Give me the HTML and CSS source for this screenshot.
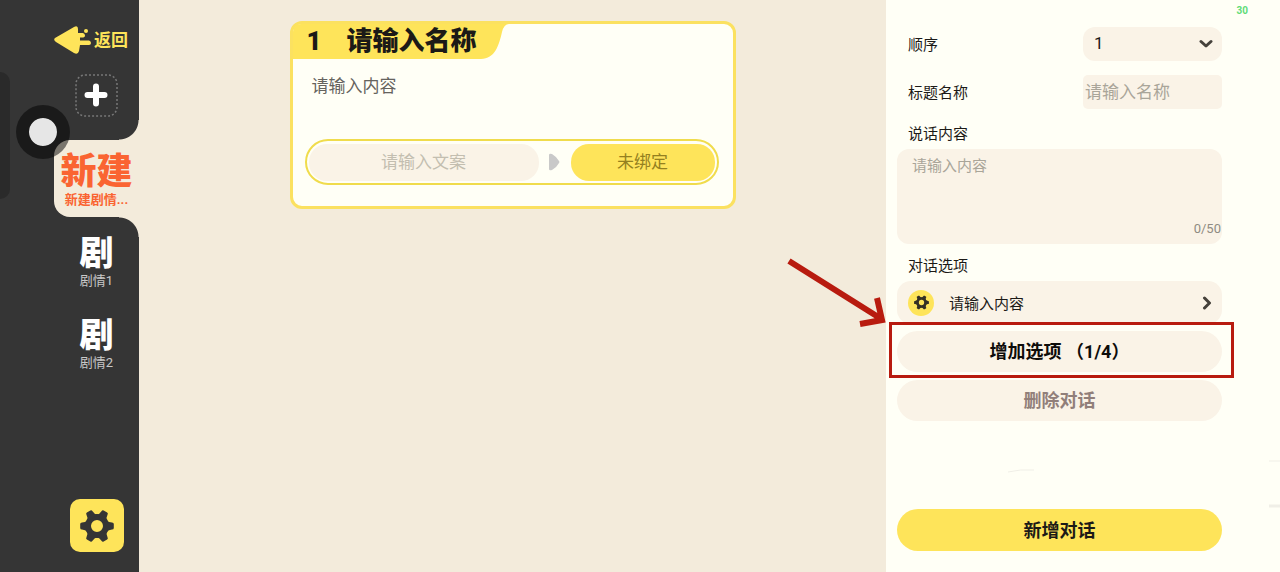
FILE: index.html
```html
<!DOCTYPE html>
<html lang="zh-CN">
<head>
  <meta charset="UTF-8">
  <meta name="viewport" content="width=device-width, initial-scale=1">
  <title>剧情编辑</title>
  <link rel="stylesheet" href="styles.css">
</head>
<body>
  <svg width="0" height="0" class="defs">
    <symbol id="gear" viewBox="-17 -17 34 34">
      <circle r="9" fill="none" stroke="currentColor" stroke-width="6"/>
      <g fill="currentColor">
        <path id="tooth" d="M9 -6 Q12 -3.500 15 -3.500 Q16.800 -3.500 16.800 -2 V2 Q16.800 3.500 15 3.500 Q12 3.500 9 6 Z"/>
        <use href="#tooth" transform="rotate(60)"/>
        <use href="#tooth" transform="rotate(120)"/>
        <use href="#tooth" transform="rotate(180)"/>
        <use href="#tooth" transform="rotate(240)"/>
        <use href="#tooth" transform="rotate(300)"/>
      </g>
    </symbol>
  </svg>

  <nav class="sidebar">
    <button class="back">
      <svg width="37" height="28" viewBox="0 0 37 28" fill="#fee45a">
        <path d="M1 12 L20 1 Q24 -1 24 3 L24 7 L29 7 Q31 7.500 31 9.500 Q31 11.500 28 11.500 L26 11.500 L26 14.500 L35 14.500 Q37 15 37 17 Q37 19 35 19 L26 19 L25 25 Q24 29 20 27 L2 16 Q-1 14 1 12 Z"/>
        <circle cx="32" cy="5" r="2"/>
      </svg>
      <span>返回</span>
    </button>
    <button class="add" aria-label="添加">
      <svg width="43" height="43" viewBox="0 0 43 43" fill="none">
        <rect x="1" y="1" width="41" height="41" rx="9" stroke="#777" stroke-width="1.500" stroke-dasharray="2 2"/>
        <path d="M21 12.500 V29.500 M12.500 21 H29.500" stroke="#fff" stroke-width="6" stroke-linecap="round"/>
      </svg>
    </button>
    <a class="story active" href="#">
      <b>新建</b>
      <span>新建剧情...</span>
    </a>
    <a class="story" href="#">
      <b>剧</b>
      <span>剧情1</span>
    </a>
    <a class="story" href="#">
      <b>剧</b>
      <span>剧情2</span>
    </a>
    <button class="settings" aria-label="设置">
      <svg width="34" height="34"><use href="#gear"/></svg>
    </button>
    <div class="edge-handle"></div>
    <div class="float-ball"></div>
  </nav>

  <main class="canvas">
    <section class="card">
      <header class="card-head">
        <h2><span>1</span><span>请输入名称</span></h2>
        <svg width="28" height="35" viewBox="0 0 28 35" fill="#fee45a">
          <path d="M0 0 H28 Q23 0 21 8 C18 21 14 35 0 35 Z"/>
        </svg>
      </header>
      <p class="card-text">请输入内容</p>
      <div class="choice">
        <span class="choice-text">请输入文案</span>
        <svg width="11" height="18" viewBox="0 0 11 18" fill="#c9c9c9">
          <path d="M0 2 Q0 0 3 1 Q8 4 10 8 Q11 9 10 10 Q8 14 3 17 Q0 18 0 16 Z"/>
        </svg>
        <button class="bind">未绑定</button>
      </div>
    </section>
  </main>

  <aside class="panel">
    <span class="fps">30</span>
    <div class="row">
      <label for="order">顺序</label>
      <div class="select">
        <select id="order">
          <option>1</option>
        </select>
        <svg width="14" height="10" viewBox="0 0 14 10"><path d="M2 2.500 L7 7 L12 2.500"/></svg>
      </div>
    </div>
    <div class="row">
      <label for="name">标题名称</label>
      <input id="name" type="text" placeholder="请输入名称">
    </div>
    <label class="title" for="content">说话内容</label>
    <div class="content">
      <textarea id="content" maxlength="50" placeholder="请输入内容"></textarea>
      <span class="count">0/50</span>
    </div>
    <h3 class="title">对话选项</h3>
    <button class="option">
      <span class="option-icon"><svg width="15" height="15"><use href="#gear"/></svg></span>
      <span>请输入内容</span>
      <svg class="chevron" width="10" height="14" viewBox="0 0 10 14"><path d="M2.500 2 L7.500 7 L2.500 12"/></svg>
    </button>
    <div class="marked">
      <button class="pill add-option">增加选项 （1/4）</button>
      <div class="mark-box"></div>
      <svg class="mark-arrow" width="102" height="72" viewBox="0 0 102 72" fill="none" stroke="#b81b0f" stroke-width="6">
        <path d="M3 4 L97 63 M91 41 L96 63 L74 67"/>
      </svg>
    </div>
    <button class="pill delete">删除对话</button>
    <button class="pill create">新增对话</button>
    <svg class="sketch" width="274" height="50" viewBox="0 0 274 50" fill="none" stroke="#f0efe7">
      <path d="M2 12 Q14 9 28 10" stroke-width="1"/>
      <path d="M263 1 H274" stroke-width="1"/>
      <path d="M263 46 H274" stroke-width="3"/>
    </svg>
  </aside>
</body>
</html>
```

FILE: styles.css
```css
* {
  box-sizing: border-box;
}
body {
  margin: 0;
  min-height: 100vh;
  display: flex;
  font-family: Roboto, "Noto Sans CJK SC", sans-serif;
  font-size: 15px;
  color: #1c1a17;
  background: #f3ebdb;
}
button, input, select, textarea {
  font: inherit;
  color: inherit;
  border: none;
  margin: 0;
  padding: 0;
  background: none;
}
button {
  cursor: pointer;
}
svg {
  display: block;
}
.defs {
  position: absolute;
}

/* sidebar */
.sidebar {
  position: relative;
  width: 139px;
  flex: none;
  display: flex;
  flex-direction: column;
  align-items: center;
  padding: 26px 0 20px 54px;
  background: #353535;
}
.back {
  display: flex;
  align-items: center;
  gap: 3px;
  height: 28px;
  margin-right: 11px;
  font-size: 17px;
  font-weight: 700;
  color: #fee45a;
  white-space: nowrap;
}
.back span {
  padding-bottom: 3px;
}
.add {
  margin: 20px 0 23px;
}
.story {
  display: flex;
  flex-direction: column;
  align-items: center;
  gap: 2px;
  width: 100%;
  margin-bottom: 28px;
  color: #fff;
  text-decoration: none;
}
.story b {
  font-size: 34px;
  font-weight: 900;
  line-height: 36px;
}
.story span {
  font-size: 13px;
  line-height: 16px;
  color: #c8c8c8;
}
.story.active {
  position: relative;
  height: 77px;
  margin-bottom: 18px;
  padding-top: 14px;
  border-radius: 16px 0 0 16px;
  background: #f3ebdb;
  color: #fa6432;
}
.story.active b {
  font-size: 36px;
}
.story.active span {
  font-weight: 700;
  color: #fa6432;
}
.story.active::before,
.story.active::after {
  content: "";
  position: absolute;
  right: 0;
  width: 20px;
  height: 20px;
}
.story.active::before {
  bottom: 100%;
  background: radial-gradient(circle at 0 0, transparent 19px, #f3ebdb 20px);
}
.story.active::after {
  top: 100%;
  background: radial-gradient(circle at 0 100%, transparent 19px, #f3ebdb 20px);
}
.settings {
  display: flex;
  align-items: center;
  justify-content: center;
  width: 54px;
  height: 53px;
  margin-top: auto;
  border-radius: 10px;
  background: #fee45a;
  color: #353535;
}
.edge-handle {
  position: absolute;
  left: 0;
  top: 72px;
  width: 10px;
  height: 127px;
  border-radius: 0 10px 10px 0;
  background: #2a2a2a;
}
.float-ball {
  position: absolute;
  left: 16px;
  top: 105px;
  width: 54px;
  height: 54px;
  border: 13px solid rgba(0, 0, 0, 0.5);
  border-radius: 50%;
  background: #e6e6e6;
  background-clip: padding-box;
}

/* canvas */
.canvas {
  flex: 1;
  padding: 21px 16px;
}
.card {
  max-width: 446px;
  min-height: 188px;
  margin: 0 auto;
  border: 3px solid #fbe160;
  border-radius: 12px;
  background: #fffff6;
}
.card-head {
  display: flex;
  height: 35px;
}
.card-head h2 {
  display: flex;
  gap: 25px;
  margin: 0;
  padding: 0 4px 0 14px;
  border-top-left-radius: 8px;
  background: #fee45a;
  font-size: 26px;
  font-weight: 900;
  line-height: 34px;
}
.card-text {
  margin: 15px 19px 41px;
  font-size: 17px;
  line-height: 24px;
  color: #65635e;
}
.choice {
  display: flex;
  align-items: center;
  justify-content: space-between;
  height: 46px;
  margin: 0 14px 0 12px;
  padding: 0 2px;
  border: 2px solid #f0dc4c;
  border-radius: 23px;
  font-size: 17px;
}
.choice-text {
  width: 230px;
  border-radius: 18px;
  background: #faf3e7;
  line-height: 37px;
  text-align: center;
  color: #c3beb0;
}
.bind {
  width: 144px;
  border-radius: 18px;
  background: #fee45a;
  line-height: 37px;
  color: #94801f;
}

/* panel */
.panel {
  position: relative;
  width: 394px;
  flex: none;
  display: flex;
  flex-direction: column;
  padding: 27px 58px 21px 11px;
  background: #fffff6;
}
.fps {
  position: absolute;
  top: 5px;
  right: 32px;
  font-size: 10px;
  font-weight: 700;
  line-height: 12px;
  color: #5fdc78;
}
.row {
  display: flex;
  align-items: center;
  justify-content: space-between;
  height: 34px;
  margin-bottom: 14px;
  padding-left: 11px;
}
.row label {
  padding-bottom: 2px;
}
.select {
  position: relative;
  width: 139px;
}
.select select {
  width: 100%;
  height: 34px;
  padding: 0 0 2px 11px;
  border-radius: 12px;
  background: #faf3e7;
  font-size: 17px;
  appearance: none;
}
.select svg {
  position: absolute;
  right: 9px;
  top: 12px;
  pointer-events: none;
}
.select path,
.chevron path {
  fill: none;
  stroke: #45413b;
  stroke-width: 3;
  stroke-linecap: round;
  stroke-linejoin: round;
}
.row input {
  width: 139px;
  height: 34px;
  padding: 0 2px;
  border-radius: 5px;
  background: #faf3e7;
  font-size: 17px;
}
::placeholder {
  color: #a9a599;
  opacity: 1;
}
.title {
  margin: 0 11px 4px;
  font-size: 15px;
  font-weight: 400;
  line-height: 22px;
}
.content {
  position: relative;
  height: 95px;
  margin-bottom: 11px;
}
.content textarea {
  display: block;
  width: 100%;
  height: 100%;
  padding: 6px 15px;
  border-radius: 12px;
  background: #faf3e7;
  line-height: 22px;
  resize: none;
}
.count {
  position: absolute;
  right: 1px;
  bottom: 7px;
  font-size: 13px;
  line-height: 16px;
  color: #8f8b82;
}
.option {
  display: flex;
  align-items: center;
  gap: 15px;
  height: 43px;
  margin-bottom: 7px;
  padding: 0 10px 0 11px;
  border-radius: 14px;
  background: #faf3e7;
}
.option-icon {
  display: flex;
  align-items: center;
  justify-content: center;
  width: 26px;
  height: 26px;
  border-radius: 50%;
  background: #fee45a;
  color: #353025;
}
.chevron {
  margin-left: auto;
}
.pill {
  width: 100%;
  height: 41px;
  padding-bottom: 3px;
  border-radius: 21px;
  background: #faf3e7;
  font-size: 18px;
  font-weight: 700;
}
.delete {
  margin-bottom: 20px;
  color: #917f7a;
}
.create {
  height: 42px;
  margin-top: auto;
  background: #fee45a;
}
.sketch {
  position: absolute;
  right: 0;
  bottom: 62px;
  pointer-events: none;
}

/* red callout on the add button */
.marked {
  position: relative;
  margin-bottom: 8px;
}
.add-option {
  color: #0d0c0a;
}
.mark-box {
  position: absolute;
  inset: -9px -12px -6px -8px;
  border: 3px solid #b81b0f;
  pointer-events: none;
}
.mark-arrow {
  position: absolute;
  right: 334px;
  top: -74px;
  pointer-events: none;
}
```
